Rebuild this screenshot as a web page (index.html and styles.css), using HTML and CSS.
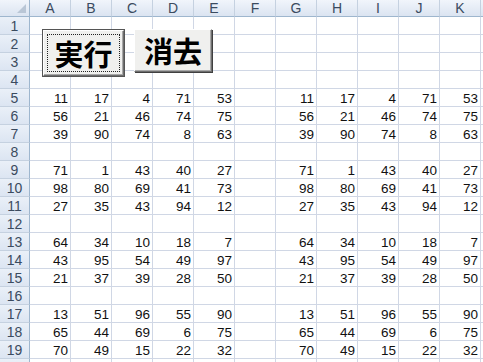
FILE: index.html
```html
<!DOCTYPE html>
<html lang="ja">
<head>
  <meta charset="UTF-8" />
  <title>Sheet1</title>
  <link rel="stylesheet" href="styles.css">
</head>
<body>
  <div class="sheet">
    <table class="grid">
      <tr class="col-head">
        <th class="corner"></th>
        <th>A</th><th>B</th><th>C</th><th>D</th><th>E</th><th>F</th>
        <th>G</th><th>H</th><th>I</th><th>J</th><th>K</th><th></th>
      </tr>
      <tr><th>1</th><td></td><td></td><td></td><td></td><td></td><td></td><td></td><td></td><td></td><td></td><td></td><td></td></tr>
      <tr><th>2</th><td></td><td></td><td></td><td></td><td></td><td></td><td></td><td></td><td></td><td></td><td></td><td></td></tr>
      <tr><th>3</th><td></td><td></td><td></td><td></td><td></td><td></td><td></td><td></td><td></td><td></td><td></td><td></td></tr>
      <tr><th>4</th><td></td><td></td><td></td><td></td><td></td><td></td><td></td><td></td><td></td><td></td><td></td><td></td></tr>
      <tr><th>5</th><td>11</td><td>17</td><td>4</td><td>71</td><td>53</td><td></td><td>11</td><td>17</td><td>4</td><td>71</td><td>53</td><td></td></tr>
      <tr><th>6</th><td>56</td><td>21</td><td>46</td><td>74</td><td>75</td><td></td><td>56</td><td>21</td><td>46</td><td>74</td><td>75</td><td></td></tr>
      <tr><th>7</th><td>39</td><td>90</td><td>74</td><td>8</td><td>63</td><td></td><td>39</td><td>90</td><td>74</td><td>8</td><td>63</td><td></td></tr>
      <tr><th>8</th><td></td><td></td><td></td><td></td><td></td><td></td><td></td><td></td><td></td><td></td><td></td><td></td></tr>
      <tr><th>9</th><td>71</td><td>1</td><td>43</td><td>40</td><td>27</td><td></td><td>71</td><td>1</td><td>43</td><td>40</td><td>27</td><td></td></tr>
      <tr><th>10</th><td>98</td><td>80</td><td>69</td><td>41</td><td>73</td><td></td><td>98</td><td>80</td><td>69</td><td>41</td><td>73</td><td></td></tr>
      <tr><th>11</th><td>27</td><td>35</td><td>43</td><td>94</td><td>12</td><td></td><td>27</td><td>35</td><td>43</td><td>94</td><td>12</td><td></td></tr>
      <tr><th>12</th><td></td><td></td><td></td><td></td><td></td><td></td><td></td><td></td><td></td><td></td><td></td><td></td></tr>
      <tr><th>13</th><td>64</td><td>34</td><td>10</td><td>18</td><td>7</td><td></td><td>64</td><td>34</td><td>10</td><td>18</td><td>7</td><td></td></tr>
      <tr><th>14</th><td>43</td><td>95</td><td>54</td><td>49</td><td>97</td><td></td><td>43</td><td>95</td><td>54</td><td>49</td><td>97</td><td></td></tr>
      <tr><th>15</th><td>21</td><td>37</td><td>39</td><td>28</td><td>50</td><td></td><td>21</td><td>37</td><td>39</td><td>28</td><td>50</td><td></td></tr>
      <tr><th>16</th><td></td><td></td><td></td><td></td><td></td><td></td><td></td><td></td><td></td><td></td><td></td><td></td></tr>
      <tr><th>17</th><td>13</td><td>51</td><td>96</td><td>55</td><td>90</td><td></td><td>13</td><td>51</td><td>96</td><td>55</td><td>90</td><td></td></tr>
      <tr><th>18</th><td>65</td><td>44</td><td>69</td><td>6</td><td>75</td><td></td><td>65</td><td>44</td><td>69</td><td>6</td><td>75</td><td></td></tr>
      <tr><th>19</th><td>70</td><td>49</td><td>15</td><td>22</td><td>32</td><td></td><td>70</td><td>49</td><td>15</td><td>22</td><td>32</td><td></td></tr>
      <tr><th></th><td></td><td></td><td></td><td></td><td></td><td></td><td></td><td></td><td></td><td></td><td></td><td></td></tr>
    </table>

    <!-- Form buttons floating over the sheet -->
    <button class="sheet-btn run"><span>実行</span></button>
    <button class="sheet-btn clear"><span>消去</span></button>
  </div>
</body>
</html>
```

FILE: styles.css
```css
:root {
  --grid: #d0d7e5;
  --head-line: #9eb6ce;
  --head-text: #3b4b5f;
}
* { box-sizing: border-box; }
html, body {
  margin: 0;
  padding: 0;
  background: #fff;
  overflow: hidden;
}
.sheet {
  position: relative;
  width: 483px;
  height: 362px;
  overflow: hidden;
}

/* Cell grid */
.grid {
  table-layout: fixed;
  border-collapse: separate;
  border-spacing: 0;
  width: 522px;
  font-family: "Liberation Sans", Arial, sans-serif;
  font-size: 13.5px;
}
.grid td,
.grid th {
  height: 18px;
  padding: 0 2px;
  border-right: 1px solid var(--grid);
  border-bottom: 1px solid var(--grid);
  line-height: 14px;
  vertical-align: bottom;
  white-space: nowrap;
  overflow: hidden;
}
.grid td {
  width: 41px;
  text-align: right;
  color: #111;
}
.grid th {
  width: 30px;
  font-weight: normal;
  text-align: center;
  vertical-align: middle;
  color: var(--head-text);
  background: linear-gradient(#eaf0f8, #dce5f2);
  border-right-color: var(--head-line);
  border-bottom-color: #c5d1e0;
  font-size: 14px;
}
.col-head th {
  width: 41px;
  height: 17px;
  border-bottom-color: var(--head-line);
  border-right-color: #c5d1e0;
  background: linear-gradient(#f1f5fb, #dbe4f1);
}
.col-head th.corner {
  width: 30px;
  position: relative;
  border-right-color: var(--head-line);
}
.corner::after {
  content: "";
  position: absolute;
  right: 3px;
  bottom: 3px;
  border-style: solid;
  border-width: 0 0 9px 9px;
  border-color: transparent transparent #b9c6d6 transparent;
}

/* Form buttons */
.sheet-btn {
  position: absolute;
  margin: 0;
  padding: 0;
  background: #f0f0ee;
  border: 1px solid;
  border-color: #fff #6e6e6e #6e6e6e #fff;
  box-shadow: 1px 1px 0 #404040, inset -1px -1px 0 #a8a8a8;
  font-family: "Noto Sans CJK JP", sans-serif;
  font-weight: bold;
  font-size: 29px;
  color: #000;
  line-height: 1;
}
.sheet-btn span {
  display: flex;
  align-items: center;
  justify-content: center;
  height: 100%;
}
.run {
  left: 43px;
  top: 30px;
  width: 81px;
  height: 46px;
  outline: 1px solid #555;
}
.run span {
  margin: 3px;
  height: calc(100% - 6px);
  border: 1px dotted #222;
}
.clear {
  left: 134px;
  top: 29px;
  width: 78px;
  height: 43px;
}
```
